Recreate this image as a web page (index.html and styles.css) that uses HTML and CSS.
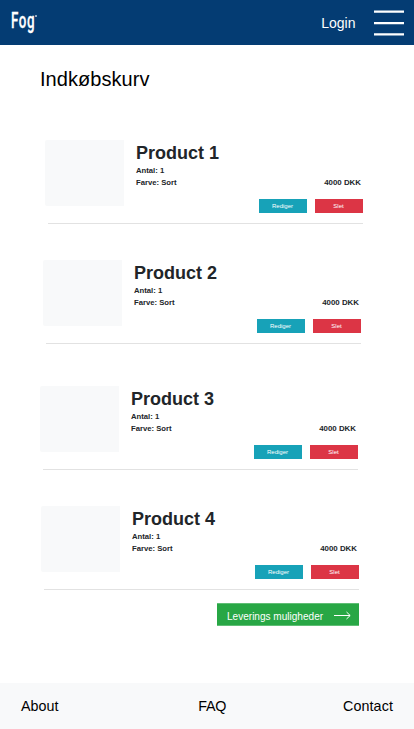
FILE: index.html
```html
<!DOCTYPE html>
<html lang="da">
<head>
<meta charset="utf-8">
<title>Indkøbskurv</title>
<link rel="stylesheet" href="styles.css">
</head>
<body>
<header class="topbar">
  <div class="logo"><span class="logo-text">Fog</span><span class="logo-dot"></span></div>
  <div class="login">Login</div>
  <svg class="menu" width="30" height="27" viewBox="0 0 30 27"><path d="M0 1.7h30M0 13.1h30M0 24.4h30" stroke="#fff" stroke-width="2.3"/></svg>
</header>
<main class="cart">
  <h1>Indkøbskurv</h1>
  <article class="item first">
    <div class="thumb"></div>
    <div class="info"><h2>Product 1</h2><p>Antal: 1</p><div class="row"><p>Farve: Sort</p><p class="price">4000 DKK</p></div></div>
    <div class="actions"><div class="btn edit">Rediger</div><div class="btn delete">Slet</div></div>
  </article>
  <article class="item second">
    <div class="thumb"></div>
    <div class="info"><h2>Product 2</h2><p>Antal: 1</p><div class="row"><p>Farve: Sort</p><p class="price">4000 DKK</p></div></div>
    <div class="actions"><div class="btn edit">Rediger</div><div class="btn delete">Slet</div></div>
  </article>
  <article class="item third">
    <div class="thumb"></div>
    <div class="info"><h2>Product 3</h2><p>Antal: 1</p><div class="row"><p>Farve: Sort</p><p class="price">4000 DKK</p></div></div>
    <div class="actions"><div class="btn edit">Rediger</div><div class="btn delete">Slet</div></div>
  </article>
  <article class="item fourth">
    <div class="thumb"></div>
    <div class="info"><h2>Product 4</h2><p>Antal: 1</p><div class="row"><p>Farve: Sort</p><p class="price">4000 DKK</p></div></div>
    <div class="actions"><div class="btn edit">Rediger</div><div class="btn delete">Slet</div></div>
  </article>
  <div class="delivery">
    <span>Leverings muligheder</span>
    <svg width="17" height="9" viewBox="0 0 17 9"><path d="M0 4.5h16M12.5 1l3.7 3.5L12.5 8" fill="none" stroke="#fff" stroke-width="1"/></svg>
  </div>
</main>
<footer class="footer"><span>About</span><span class="faq">FAQ</span><span class="contact">Contact</span></footer>
</body>
</html>
```
FILE: styles.css
```css
* { box-sizing: border-box; }
body, h1, h2, p { margin: 0; }
body {
  width: 414px;
  height: 729px;
  display: flex;
  flex-direction: column;
  overflow: hidden;
  background: #fff;
  color: #000;
  font-family: "Liberation Sans", Arial, sans-serif;
}
.topbar {
  height: 45px;
  display: flex;
  align-items: flex-start;
  padding: 0 10px 0 11px;
  background: #043c73;
  color: #fff;
}
.logo {
  display: flex;
  width: 28px;
  height: 28px;
  margin-top: 8px;
}
.logo-text {
  width: 23px;
  font: 500 21.5px/25px Roboto, sans-serif;
  color: #fff;
  -webkit-text-stroke: .3px #fff;
  transform: scaleX(.62);
  transform-origin: 0 0;
  letter-spacing: .9px;
}
.logo-dot {
  width: 2px;
  height: 2px;
  margin: 7px 0 0 1px;
  background: #8fa9c2;
}
.login { margin: 15px 18.5px 0 auto; font-size: 14px; line-height: 17px; }
.menu { margin-top: 10px; }
.cart { flex: 1; }
h1 {
  margin: 23px 0 0 40px;
  font-size: 20px;
  line-height: 23px;
  font-weight: 400;
  letter-spacing: .05px;
}
.item {
  width: 318px;
  height: 84px;
  display: grid;
  grid-template-columns: 79px 225px;
  grid-template-rows: 59px 14px;
  column-gap: 12px;
  position: relative;
}
.item::after {
  content: "";
  position: absolute;
  left: 3px;
  right: 0;
  bottom: 0;
  height: 1px;
  background: #e2e2e2;
}
.first { margin: 49px 0 0 45px; }
.second { margin: 36px 0 0 43px; }
.third { margin: 42px 0 0 40px; }
.fourth { margin: 36px 0 0 41px; }
.thumb {
  grid-row: 1 / 3;
  height: 66px;
  border-radius: 2px 0 0 2px;
  background: #f8f9fa;
}
.info { padding-top: 2px; color: #212529; }
h2 { margin-bottom: 1px; font-size: 18px; line-height: 22px; }
.info p { font-size: 7.7px; line-height: 12px; font-weight: 700; color: #212529; }
.info .price { font-size: 7.9px; }
.row { display: flex; justify-content: space-between; }
.actions {
  grid-column: 2;
  display: flex;
  justify-content: flex-end;
  gap: 8px;
  margin-right: -2px;
}
.btn {
  width: 48px;
  height: 14px;
  padding-right: 1px;
  font-size: 6px;
  line-height: 14px;
  text-align: center;
  color: #fff;
}
.edit { background: #17a2b8; }
.delete { background: #dc3545; }
.delivery {
  width: 142px;
  height: 23px;
  margin: 13px 0 0 217px;
  padding: 1px 8px 0 10px;
  display: flex;
  align-items: center;
  justify-content: space-between;
  background: #28a745;
  border: solid #5fbe75;
  border-width: 1px 0;
  color: #fff;
  font-size: 10.05px;
  white-space: nowrap;
}
.delivery span { padding-top: 2px; }
.footer {
  height: 46px;
  display: flex;
  justify-content: space-between;
  padding: 15px 21px 0;
  background: #f8f9fa;
  font-size: 14.3px;
  line-height: 17px;
}
.faq { margin-left: 23px; letter-spacing: -.2px; }
.contact { letter-spacing: .1px; }
```
